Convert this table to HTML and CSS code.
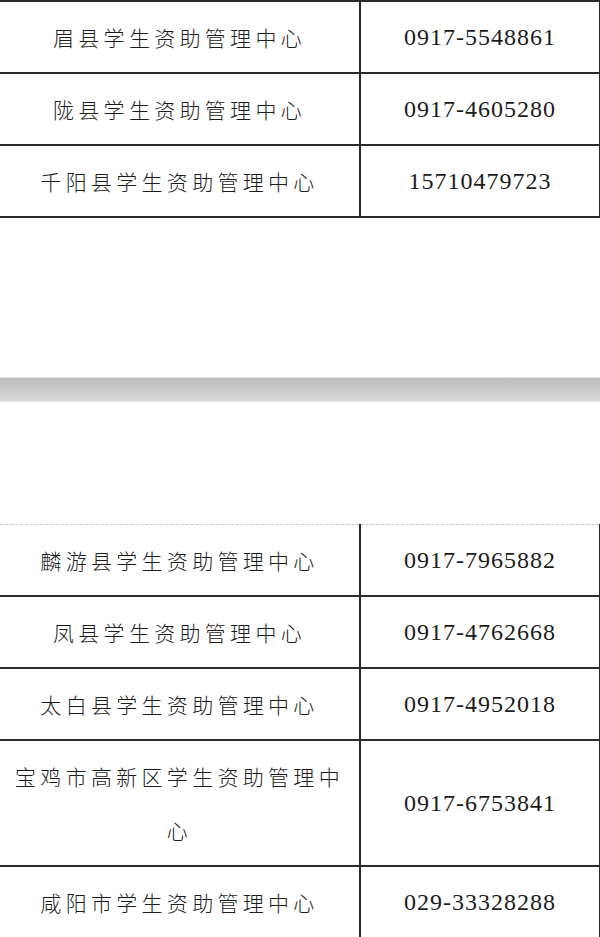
FILE: index.html
```html
<!DOCTYPE html>
<html lang="zh-CN">
<head>
    <meta charset="UTF-8">
    <meta name="viewport" content="width=device-width, initial-scale=1.0">
    <title>学生资助管理中心联系电话</title>
    <link rel="stylesheet" href="styles.css">
</head>
<body>
    <table class="contact-table">
        <colgroup>
            <col class="col-name">
            <col class="col-phone">
        </colgroup>
        <tr>
            <td class="name">眉县学生资助管理中心</td>
            <td class="phone">0917-5548861</td>
        </tr>
        <tr>
            <td class="name">陇县学生资助管理中心</td>
            <td class="phone">0917-4605280</td>
        </tr>
        <tr>
            <td class="name">千阳县学生资助管理中心</td>
            <td class="phone">15710479723</td>
        </tr>
    </table>

    <!-- page break between the two halves of the table -->
    <div class="page-break"></div>

    <table class="contact-table contact-table--cont">
        <colgroup>
            <col class="col-name">
            <col class="col-phone">
        </colgroup>
        <tr>
            <td class="name">麟游县学生资助管理中心</td>
            <td class="phone">0917-7965882</td>
        </tr>
        <tr>
            <td class="name">凤县学生资助管理中心</td>
            <td class="phone">0917-4762668</td>
        </tr>
        <tr>
            <td class="name">太白县学生资助管理中心</td>
            <td class="phone">0917-4952018</td>
        </tr>
        <tr>
            <td class="name">宝鸡市高新区学生资助管理中心</td>
            <td class="phone">0917-6753841</td>
        </tr>
        <tr>
            <td class="name">咸阳市学生资助管理中心</td>
            <td class="phone">029-33328288</td>
        </tr>
    </table>
</body>
</html>
```

FILE: styles.css
```css
:root {
    --line-color: #2b2b2b;
    --text-color: #1c1c1c;
    --dash-color: #c8c8c8;
}

* {
    margin: 0;
    padding: 0;
    box-sizing: border-box;
}

body {
    background-color: #fff;
    color: var(--text-color);
    font-family: "Noto Sans CJK SC", sans-serif;
    overflow: hidden;
}

.contact-table {
    width: 600px;
    table-layout: fixed;
    border-collapse: collapse;
    border-top: 2px solid var(--line-color);
    border-right: 2px solid var(--line-color);
}

.col-name {
    width: 360px;
}

.col-phone {
    width: 240px;
}

.contact-table td {
    padding: 8px 10px;
    line-height: 54px;
    text-align: center;
    vertical-align: middle;
    border-bottom: 2px solid var(--line-color);
}

.contact-table .name {
    font-size: 21px;
    font-weight: 300;
    letter-spacing: 4.3px;
    border-right: 2px solid var(--line-color);
}

.contact-table .phone {
    font-family: "Liberation Serif", serif;
    font-size: 24px;
    letter-spacing: 1px;
}

.page-break {
    height: 25px;
    margin: 159px 0 122px;
    border-top: 1px solid #e6e6e6;
    border-bottom: 1px solid #e6e6e6;
    background: linear-gradient(#bdbdbd, #d8d8d8);
}

.contact-table--cont {
    border-top: 1px dashed var(--dash-color);
}
```
